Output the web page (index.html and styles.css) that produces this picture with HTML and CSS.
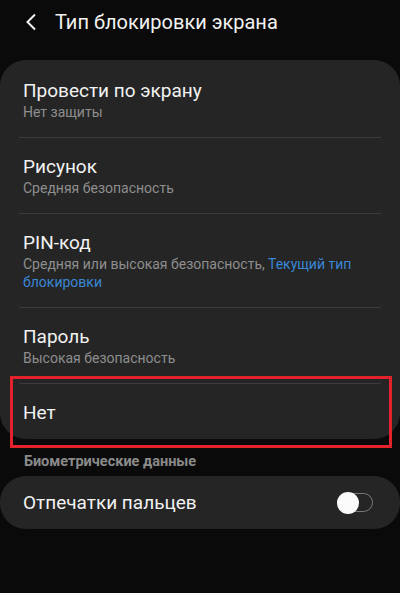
FILE: index.html
```html
<!DOCTYPE html>
<html lang="ru">
<head>
    <meta charset="UTF-8">
    <meta name="viewport" content="width=device-width, initial-scale=1.0">
    <title>Тип блокировки экрана</title>
    <link rel="stylesheet" href="styles.css">
</head>
<body>
    <!-- Шапка -->
    <div class="header">
        <a href="#" class="back">
            <svg width="12" height="18" viewBox="0 0 12 18"><path d="M10 1.5 L2.5 9 L10 16.5" fill="none" stroke="#f2f2f2" stroke-width="2"/></svg>
        </a>
        <h1>Тип блокировки экрана</h1>
    </div>

    <!-- Список типов блокировки -->
    <div class="card">
        <div class="item">
            <div class="item-title">Провести по экрану</div>
            <div class="item-sub">Нет защиты</div>
        </div>
        <div class="item">
            <div class="item-title">Рисунок</div>
            <div class="item-sub">Средняя безопасность</div>
        </div>
        <div class="item">
            <div class="item-title">PIN-код</div>
            <div class="item-sub">Средняя или высокая безопасность, <span class="current">Текущий тип</span><br><span class="current">блокировки</span></div>
        </div>
        <div class="item">
            <div class="item-title">Пароль</div>
            <div class="item-sub">Высокая безопасность</div>
        </div>
        <div class="item item-none marked">
            <div class="item-title">Нет</div>
        </div>
    </div>

    <div class="section-label">Биометрические данные</div>

    <div class="card card-row">
        <div class="item-title">Отпечатки пальцев</div>
        <div class="switch"><span class="knob"></span></div>
    </div>
</body>
</html>
```

FILE: styles.css
```css
body {
    margin: 0;
    height: 593px;
    background-color: #0a0a0a;
    color: #f2f2f2;
    font-family: Roboto, "Noto Sans", sans-serif;
    overflow: hidden;
}

.header {
    display: flex;
    align-items: center;
    height: 44px;
    padding: 0 0 0 25px;
}

.back {
    display: flex;
    width: 30px;
}

h1 {
    margin: 0;
    font-size: 20px;
    font-weight: normal;
}

.card {
    margin-top: 16px;
    padding-top: 2px;
    background-color: #252525;
    border-radius: 26px;
}

.item {
    margin: 0 19px;
    padding: 17px 4px 16px;
    border-top: 1px solid #3b3b3b;
}

.item:first-child {
    border-top: none;
}

.item-title {
    font-size: 19px;
    line-height: 24px;
}

.item-sub {
    font-size: 14px;
    line-height: 18px;
    color: #8e8e8e;
}

.current {
    color: #3a87d6;
}

.item-none {
    padding-bottom: 14px;
}

/* Красная рамка поверх пункта "Нет" */
.marked {
    position: relative;
}

.marked::after {
    content: "";
    position: absolute;
    top: -8px;
    bottom: -9px;
    left: -9px;
    right: -11px;
    border: 3px solid #e3222c;
}

.section-label {
    padding: 14px 24px 5px;
    font-size: 14.5px;
    line-height: 18px;
    font-weight: bold;
    color: #8a8a8a;
}

.card-row {
    display: flex;
    align-items: center;
    justify-content: space-between;
    height: 53px;
    margin-top: 0;
    padding: 0 27px 0 23px;
}

.switch {
    display: flex;
    align-items: center;
    width: 34px;
    height: 17px;
    border: 1.5px solid #7a7a7a;
    border-radius: 10px;
}

.knob {
    width: 22px;
    height: 22px;
    margin-left: -1.5px;
    border-radius: 50%;
    background-color: #fafafa;
}
```
